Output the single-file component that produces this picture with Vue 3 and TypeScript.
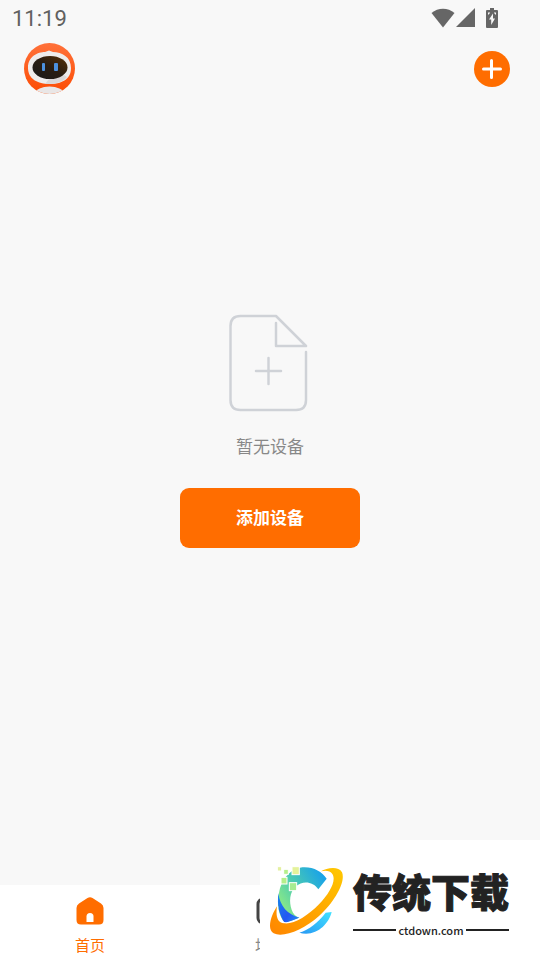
<script setup lang="ts">
import { ref } from 'vue'

type TabId = 'home' | 'scene'

interface Tab {
  id: TabId
  label: string
}

const tabs: Tab[] = [
  { id: 'home', label: '首页' },
  { id: 'scene', label: '场景' },
]
const active = ref<TabId>('home')
</script>

<template>
  <div class="screen">
    <div class="status">
      <span class="time">11:19</span>
      <div class="indicators">
        <svg class="wifi" viewBox="0 0 24 20" aria-hidden="true">
          <path d="M0.5 5C7-.8 17-.8 23.500 5L12 19.500Z" />
        </svg>
        <svg class="signal" viewBox="0 0 20 20" aria-hidden="true">
          <path d="M19 0V19H0Z" />
        </svg>
        <svg class="battery" viewBox="0 0 12 20" aria-hidden="true">
          <path d="M4 0h4v2h3q1 0 1 1v16q0 1-1 1H1q-1 0-1-1V3q0-1 1-1h3Z" />
          <path class="bolt" d="M7 5.500L3 11.500H5.200V17L9 10.500H7ZM2 4.500h2v1H3v1H2ZM8 4.500h2v2H9v-1H8Z" />
        </svg>
      </div>
    </div>

    <header class="topbar">
      <button class="round avatar" type="button" aria-label="Profile">
        <svg viewBox="0 0 51 51" aria-hidden="true">
          <defs>
            <linearGradient id="shell" x1="0" y1="0" x2="0" y2="1">
              <stop offset="0" stop-color="#ff713a" />
              <stop offset="1" stop-color="#fc4b03" />
            </linearGradient>
            <linearGradient id="visor" x1="0" y1="1" x2="1" y2="0">
              <stop offset="0" stop-color="#191a1c" />
              <stop offset=".5" stop-color="#291d12" />
              <stop offset="1" stop-color="#583007" />
            </linearGradient>
            <clipPath id="disc"><circle cx="25.500" cy="25.500" r="25.500" /></clipPath>
          </defs>
          <g clip-path="url(#disc)">
            <rect width="51" height="51" fill="url(#shell)" />
            <path d="M4 25C4 13 14 9 21 9L25 7.500L29 9C38 9 47 14 47 25C47 37 37 41 25.500 41S4 36 4 25Z" fill="#eeecec" />
            <path d="M25 36L21 41Q37 42 43 34L40 32Z" fill="#dad7d7" />
            <ellipse cx="26" cy="24.500" rx="17.500" ry="11.500" fill="url(#visor)" />
            <rect x="18" y="20" width="3" height="8" rx="1" fill="#4c91df" />
            <rect x="30" y="20" width="4" height="8" rx="1" fill="#4c91df" />
            <ellipse cx="25.500" cy="50" rx="14" ry="6.500" fill="#e9e6e6" />
          </g>
        </svg>
      </button>
      <button class="round plus" type="button" aria-label="添加设备">
        <svg viewBox="0 0 36 36" aria-hidden="true">
          <path d="M9.500 18H26.500M17.500 9.500V26.500" />
        </svg>
      </button>
    </header>

    <main class="empty">
      <svg class="doc" viewBox="0 0 80 98" aria-hidden="true">
        <path d="M78 38V86Q78 96 68 96H12.500Q2.500 96 2.500 86V12Q2.500 2 12.500 2H48L78 32H48V9" />
        <path d="M40.500 44V70M28 57H53" />
      </svg>
      <p class="hint">暂无设备</p>
      <button class="add" type="button">添加设备</button>
    </main>

    <nav class="tabs">
      <button
        v-for="tab in tabs"
        :key="tab.id"
        class="tab"
        :class="{ active: active === tab.id }"
        type="button"
        @click="active = tab.id"
      >
        <svg v-if="tab.id === 'home'" viewBox="0 0 28 28" aria-hidden="true">
          <path
            d="M11.500 1Q14-.3 16.500 1L25 6.500Q27.500 8 27.500 11V23Q27.500 27.500 23 27.500H5Q.5 27.500 .5 23V11Q.5 8 3 6.500Z"
            fill="currentColor"
          />
          <path d="M10.500 25V19.500Q10.500 16 14 16T17.500 19.500V25Z" fill="#fff" />
        </svg>
        <svg v-else viewBox="0 0 28 28" aria-hidden="true">
          <rect x="2" y="2" width="24" height="24" rx="5" fill="none" stroke="#444" stroke-width="3" />
        </svg>
        <span>{{ tab.label }}</span>
      </button>
    </nav>

    <aside class="brand">
      <svg class="mark" viewBox="90 84 225 219" aria-hidden="true">
        <defs>
          <linearGradient id="ring" x1="0" y1="1" x2="1" y2="0">
            <stop offset="0" stop-color="#ff8500" />
            <stop offset="1" stop-color="#ffc800" />
          </linearGradient>
          <linearGradient id="arc" x1="0" y1=".8" x2="1" y2=".1">
            <stop offset="0" stop-color="#9af17c" />
            <stop offset=".45" stop-color="#4ccbb0" />
            <stop offset="1" stop-color="#129df0" />
          </linearGradient>
          <linearGradient id="deep" x1="0" y1="0" x2="1" y2="1">
            <stop offset="0" stop-color="#1687ec" />
            <stop offset=".6" stop-color="#2457f2" />
            <stop offset="1" stop-color="#2390fa" />
          </linearGradient>
          <linearGradient id="tail" x1="0" y1="1" x2="1" y2="0">
            <stop offset="0" stop-color="#2898f4" />
            <stop offset="1" stop-color="#42e2ff" />
          </linearGradient>
        </defs>
        <path d="M180 95C216 90 244 105 260 128L235 160C218 135 187 134 168 151C148 169 147 198 155 221C159 233 166 241 178 245L135 261C114 237 110 202 117 170C123 134 147 101 180 95Z" fill="url(#arc)" />
        <path d="M115 172C120 211 143 236 178 245L135 262C117 238 111 207 115 172Z" fill="url(#deep)" />
        <path d="M178 290C207 281 235 259 257 230L275 228C266 266 226 304 178 290Z" fill="url(#tail)" />
        <path
          class="orbit"
          d="M243 106C260 95 296 89 306 109C318 137 284 198 237 240C192 281 130 306 101 292C79 279 94 237 111 211C107 239 111 259 132 262C161 266 203 240 237 205C269 172 290 134 277 114C271 104 257 103 243 106Z"
          fill="url(#ring)"
        />
        <g stroke="#fff" stroke-width="3">
          <rect x="112" y="92" width="13" height="13" fill="#e4f0a0" />
          <rect x="131" y="100" width="14" height="15" fill="#b5ef8b" />
          <rect x="156" y="92" width="22" height="24" fill="#e4f29a" />
          <rect x="123" y="124" width="18" height="20" fill="#b5ef8b" />
          <rect x="148" y="140" width="22" height="24" fill="#a7ec91" />
        </g>
      </svg>
      <div class="wordmark">
        <strong>传统下载</strong>
        <div class="domain"><span>ctdown.com</span></div>
      </div>
    </aside>
  </div>
</template>

<style>
body {
  background: #f8f8f8;
}
</style>

<style scoped>
.screen {
  position: relative;
  display: flex;
  flex-direction: column;
  min-height: 100vh;
  overflow: hidden;
  background: #f8f8f8;
  font-family: Roboto, 'Noto Sans CJK SC', sans-serif;
}

button {
  padding: 0;
  border: 0;
  background: none;
  font-family: inherit;
  cursor: pointer;
}

svg {
  display: block;
}

.status {
  display: flex;
  align-items: center;
  justify-content: space-between;
  height: 36px;
  padding: 0 42px 0 12px;
  color: #606060;
  fill: #666;
}

.time {
  padding-top: 2px;
  font-size: 22px;
  line-height: 24px;
}

.indicators {
  display: flex;
  align-items: center;
}

.wifi {
  width: 24px;
  height: 20px;
}

.signal {
  width: 20px;
  height: 20px;
  margin: 0 10px 0 1px;
}

.battery {
  width: 12px;
  height: 20px;
}

.bolt {
  fill: #f8f8f8;
}

.topbar {
  display: flex;
  align-items: center;
  justify-content: space-between;
  padding: 7px 30px 7px 24px;
}

.round {
  border-radius: 50%;
}

.avatar,
.avatar svg {
  width: 51px;
  height: 51px;
}

.plus {
  width: 36px;
  height: 36px;
  background: #ff6d00;
}

.plus path {
  stroke: #fff;
  stroke-width: 3;
  stroke-linecap: round;
}

.empty {
  display: flex;
  flex: 1;
  flex-direction: column;
  align-items: center;
  padding-top: 213px;
}

.doc {
  width: 80px;
  height: 98px;
  margin-right: 4px;
  fill: none;
  stroke: #cfd2d7;
  stroke-width: 2.500;
  stroke-linecap: round;
  stroke-linejoin: round;
}

.hint {
  margin: 23px 0 28px;
  color: #888;
  font-size: 17px;
  line-height: 25px;
}

.add {
  width: 180px;
  height: 60px;
  padding-bottom: 4px;
  border-radius: 9px;
  background: #ff6d00;
  color: #fff;
  font-size: 17px;
  font-weight: 700;
}

.tabs {
  display: grid;
  grid-template-columns: repeat(3, 1fr);
  height: 75px;
  background: #fff;
}

.tab {
  display: flex;
  flex-direction: column;
  align-items: center;
  gap: 10px;
  padding-top: 12px;
  color: #888;
  font-size: 15px;
  line-height: 22px;
}

.tab.active {
  color: #ff6d00;
}

.tab svg {
  width: 28px;
  height: 28px;
}

.brand {
  position: absolute;
  right: 0;
  bottom: 0;
  display: flex;
  align-items: center;
  gap: 8px;
  box-sizing: border-box;
  width: 280px;
  height: 120px;
  padding-left: 10px;
  background: #fff;
  color: #222;
}

.mark {
  width: 75px;
  height: 73px;
}

.orbit {
  stroke: #fff;
  stroke-width: 8;
  paint-order: stroke;
}

.wordmark {
  width: 156px;
}

.wordmark strong {
  display: block;
  font-family: 'Noto Sans CJK SC', sans-serif;
  font-size: 39px;
  font-weight: 900;
  line-height: 60px;
  white-space: nowrap;
  -webkit-text-stroke: 1px #222;
}

.domain {
  display: flex;
  align-items: center;
  gap: 2px;
  font-family: 'Noto Sans CJK SC', sans-serif;
  font-size: 11px;
  font-weight: 500;
  line-height: 20px;
}

.domain::before,
.domain::after {
  flex: 1;
  height: 2px;
  background: #222;
  content: '';
}
</style>
